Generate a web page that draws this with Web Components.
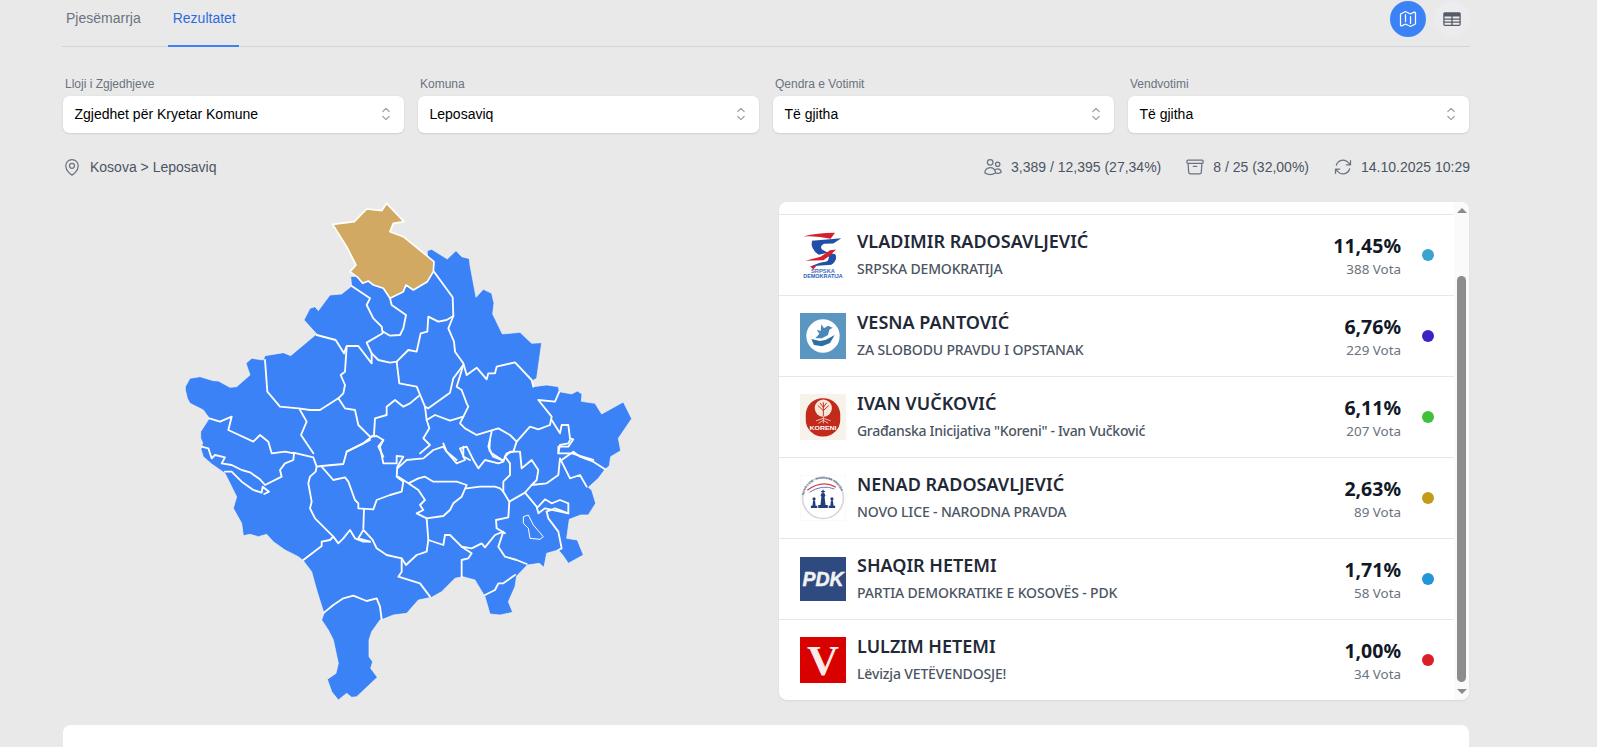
<!DOCTYPE html>
<html lang="en">
  <head>
    <meta charset="UTF-8" />
    <title>Rezultatet</title>
    <style>
      html, body { margin: 0; height: 747px; overflow: hidden; background: #e9e9e9; }
      body { font-family: "Liberation Sans", Arial, sans-serif; }
    </style>
  </head>
  <body>
    <results-page>
      <tab-bar slot="tabs"></tab-bar>

      <select-field slot="filters" label="Lloji i Zgjedhjeve" value="Zgjedhet për Kryetar Komune"></select-field>
      <select-field slot="filters" label="Komuna" value="Leposaviq"></select-field>
      <select-field slot="filters" label="Qendra e Votimit" value="Të gjitha"></select-field>
      <select-field slot="filters" label="Vendvotimi" value="Të gjitha"></select-field>

      <info-bar slot="info"></info-bar>
      <kosovo-map slot="map"></kosovo-map>

      <results-panel slot="panel">
        <candidate-row name="VLADIMIR RADOSAVLJEVIĆ" party="SRPSKA DEMOKRATIJA" pct="11,45%" votes="388 Vota" dot="#3ba3d0">
          <svg slot="logo" viewBox="0 0 138 140" width="46" height="47">
            <rect width="138" height="140" fill="#fff" />
            <path d="M10 13 Q50 2 105 2 L92 20 Q50 10 10 13Z" fill="#d6202c" />
            <path d="M36 26 L124 18 L100 34 L72 35 Q58 42 66 52 L84 62 L56 68 Q30 50 36 26Z" fill="#1f4fa8" />
            <path d="M78 60 L106 66 Q114 84 94 98 L32 102 L60 92 L80 88 Q94 76 78 60Z" fill="#1f4fa8" />
            <path d="M16 86 L62 74 L90 54 L108 52 L90 70 L70 84Z" fill="#d6202c" />
            <path d="M30 102 L50 100 L40 112Z" fill="#d6202c" />
            <text x="69" y="122" text-anchor="middle" font-family="Liberation Sans" font-weight="700" font-size="14" fill="#4a6fc0" textLength="72" lengthAdjust="spacingAndGlyphs">SRPSKA</text>
            <text x="69" y="137" text-anchor="middle" font-family="Liberation Sans" font-weight="700" font-size="14" fill="#2b62b8" textLength="118" lengthAdjust="spacingAndGlyphs">DEMOKRATIJA</text>
          </svg>
        </candidate-row>
        <candidate-row name="VESNA PANTOVIĆ" party="ZA SLOBODU PRAVDU I OPSTANAK" pct="6,76%" votes="229 Vota" dot="#3c22c4">
          <svg slot="logo" viewBox="0 0 138 138" width="46" height="46">
            <rect width="138" height="138" fill="#5a96c0" />
            <circle cx="69" cy="69" r="50" fill="#fff" />
            <path d="M64 34 L72 46 L84 38 L98 44 L88 50 L84 66 L66 76 L46 76 L58 62 L50 50 L62 54Z" fill="#4a87b8" />
            <path d="M34 78 L60 84 L78 80 L104 66 L90 90 L66 100 L42 96Z" fill="#2f6ea3" />
          </svg>
        </candidate-row>
        <candidate-row name="IVAN VUČKOVIĆ" party='Građanska Inicijativa "Koreni" - Ivan Vučković' tight pct="6,11%" votes="207 Vota" dot="#3fc23a">
          <svg slot="logo" viewBox="0 0 144 144" width="46" height="46">
            <rect width="144" height="144" fill="#f8f3ea" />
            <rect x="18" y="13" width="108" height="120" rx="52" fill="#c22a1c" />
            <circle cx="73" cy="44" r="27" fill="#f6e6da" />
            <path d="M73 70 V26 M73 52 L56 36 M73 52 L90 36 M73 42 L63 28 M73 42 L83 28" fill="none" stroke="#c22a1c" stroke-width="3" />
            <path d="M73 70 V92 M73 76 L50 84 M73 76 L96 84 M73 82 L58 92 M73 82 L88 92" fill="none" stroke="#f6e6da" stroke-width="2.5" />
            <text x="72" y="113" text-anchor="middle" font-family="Liberation Sans" font-weight="700" font-size="19" fill="#fff" textLength="85" lengthAdjust="spacingAndGlyphs">KORENI</text>
          </svg>
        </candidate-row>
        <candidate-row name="NENAD RADOSAVLJEVIĆ" party="NOVO LICE - NARODNA PRAVDA" pct="2,63%" votes="89 Vota" dot="#c49a1a">
          <svg slot="logo" viewBox="0 0 144 144" width="46" height="46">
            <rect width="144" height="144" fill="#fff" />
            <rect x=".5" y=".5" width="143" height="143" fill="none" stroke="#eee" />
            <circle cx="72" cy="72" r="64" fill="none" stroke="#d5d7db" stroke-width="5" />
            <path id="ring-text" d="M12 72 A60 60 0 0 1 132 72" fill="none" />
            <text font-family="Liberation Sans" font-size="10" font-weight="700" fill="#3f5580"><textPath href="#ring-text" startOffset="8">NOVO LICE - NARODNA PRAVDA</textPath></text>
            <path d="M23 48 Q68 14 112 38" fill="none" stroke="#d6404a" stroke-width="4" />
            <path d="M30 54 Q70 28 108 44" fill="none" stroke="#5578b8" stroke-width="3" />
            <g fill="#1f3f7a">
              <circle cx="44" cy="75" r="5" />
              <path d="M41 80h6l2 16h5v7H34v-7h5z" />
              <path d="M70 46h4v4h4v4h-4v4h-4v-4h-4v-4h4z" />
              <circle cx="72" cy="63" r="7" />
              <path d="M67 69h10l3 25h7v9H57v-9h7z" />
              <circle cx="100" cy="75" r="5" />
              <path d="M97 80h6l2 16h5v7H90v-7h5z" />
            </g>
          </svg>
        </candidate-row>
        <candidate-row name="SHAQIR HETEMI" party="PARTIA DEMOKRATIKE E KOSOVËS - PDK" pct="1,71%" votes="58 Vota" dot="#2196d8">
          <svg slot="logo" viewBox="0 0 46 44" width="46" height="44">
            <rect width="46" height="44" fill="#2f4a80" />
            <text x="23" y="29" text-anchor="middle" font-family="Liberation Sans" font-weight="700" font-style="italic" font-size="21" fill="#f2f2f2" stroke="#f2f2f2" stroke-width=".5" textLength="41" lengthAdjust="spacingAndGlyphs">PDK</text>
          </svg>
        </candidate-row>
        <candidate-row name="LULZIM HETEMI" party="Lëvizja VETËVENDOSJE!" pct="1,00%" votes="34 Vota" dot="#dc1f26">
          <svg slot="logo" viewBox="0 0 46 46" width="46" height="46">
            <rect width="46" height="46" fill="#d90000" />
            <text x="23" y="38" text-anchor="middle" font-family="Liberation Serif" font-weight="700" font-size="42" fill="#fbeaea" textLength="32" lengthAdjust="spacingAndGlyphs">V</text>
          </svg>
        </candidate-row>
      </results-panel>
    </results-page>

    <script>
      const ICONS = {
        pin: '<path d="M15 10.5a3 3 0 1 1-6 0 3 3 0 0 1 6 0Z"/><path d="M19.5 10.5c0 7.142-7.5 11.25-7.5 11.25S4.5 17.642 4.5 10.5a7.5 7.5 0 1 1 15 0Z"/>',
        users: '<path d="M15 19.128a9.38 9.38 0 0 0 2.625.372 9.337 9.337 0 0 0 4.121-.952 4.125 4.125 0 0 0-7.533-2.493M15 19.128v-.003c0-1.113-.285-2.16-.786-3.07M15 19.128v.106A12.318 12.318 0 0 1 8.624 21c-2.331 0-4.512-.645-6.374-1.766l-.001-.109a6.375 6.375 0 0 1 11.964-3.07M12 6.375a3.375 3.375 0 1 1-6.75 0 3.375 3.375 0 0 1 6.75 0Zm8.25 2.25a2.625 2.625 0 1 1-5.25 0 2.625 2.625 0 0 1 5.25 0Z"/>',
        box: '<path d="m20.25 7.5-.625 10.632a2.25 2.25 0 0 1-2.247 2.118H6.622a2.25 2.25 0 0 1-2.247-2.118L3.75 7.5M10 11.25h4M3.375 7.5h17.25c.621 0 1.125-.504 1.125-1.125v-1.5c0-.621-.504-1.125-1.125-1.125H3.375c-.621 0-1.125.504-1.125 1.125v1.5c0 .621.504 1.125 1.125 1.125Z"/>',
        sync: '<path d="M16.023 9.348h4.992v-.001M2.985 19.644v-4.992m0 0h4.992m-4.993 0 3.181 3.183a8.25 8.25 0 0 0 13.803-3.7M4.031 9.865a8.25 8.25 0 0 1 13.803-3.7l3.181 3.182m0-4.991v4.99"/>',
      };

      // Tabs and the map / table toggle
      class TabBar extends HTMLElement {
        constructor() {
          super();
          this.attachShadow({ mode: "open" });
        }

        connectedCallback() {
          this.shadowRoot.innerHTML = `
            <style>
              :host {
                display: flex;
                align-items: flex-start;
                justify-content: space-between;
                height: 46px;
                border-bottom: 1px solid #d1d5db;
                font-size: 14px;
              }
              nav { display: flex; gap: 23px; }
              a {
                display: block;
                height: 45px;
                padding: 9px 4px 0;
                box-sizing: border-box;
                line-height: 18px;
                color: #6b7280;
              }
              a + a { padding: 9px 4px 0 5px; width: 71px; }
              a.on { color: #2f6be0; border-bottom: 2px solid #3b82f6; height: 47px; }
              .toggle { display: flex; gap: 8px; padding-top: 1px; }
              button {
                width: 36px;
                height: 36px;
                padding: 0;
                border: 0;
                border-radius: 50%;
                display: flex;
                align-items: center;
                justify-content: center;
                background: #ececee;
                color: #555b66;
              }
              button.on { background: #3b82f6; color: #fff; }
            </style>
            <nav><a>Pjesëmarrja</a><a class="on">Rezultatet</a></nav>
            <div class="toggle">
              <button class="on">
                <svg width="20" height="20" viewBox="0 0 24 24" fill="none" stroke="currentColor" stroke-width="1.5" stroke-linecap="round" stroke-linejoin="round"><path d="M9 6.75V15m6-6v8.25m.503 3.498 4.875-2.437c.381-.19.622-.58.622-1.006V4.82c0-.836-.88-1.38-1.628-1.006l-3.869 1.934c-.317.159-.69.159-1.006 0L9.503 3.252a1.125 1.125 0 0 0-1.006 0L3.622 5.689C3.24 5.88 3 6.27 3 6.695V19.18c0 .836.88 1.38 1.628 1.006l3.869-1.934c.317-.159.69-.159 1.006 0l4.994 2.497c.317.158.69.158 1.006 0Z"/></svg>
              </button>
              <button>
                <svg width="20" height="20" viewBox="0 0 24 24" fill="currentColor"><path fill-rule="evenodd" clip-rule="evenodd" d="M1.5 5.625c0-1.036.84-1.875 1.875-1.875h17.25c1.035 0 1.875.84 1.875 1.875v12.75c0 1.035-.84 1.875-1.875 1.875H3.375A1.875 1.875 0 0 1 1.5 18.375V5.625ZM21 9.375A.375.375 0 0 0 20.625 9h-7.5a.375.375 0 0 0-.375.375v1.5c0 .207.168.375.375.375h7.5a.375.375 0 0 0 .375-.375v-1.5Zm0 3.75a.375.375 0 0 0-.375-.375h-7.5a.375.375 0 0 0-.375.375v1.5c0 .207.168.375.375.375h7.5a.375.375 0 0 0 .375-.375v-1.5Zm0 3.75a.375.375 0 0 0-.375-.375h-7.5a.375.375 0 0 0-.375.375v1.5c0 .207.168.375.375.375h7.5a.375.375 0 0 0 .375-.375v-1.5ZM10.875 18.75a.375.375 0 0 0 .375-.375v-1.5a.375.375 0 0 0-.375-.375h-7.5a.375.375 0 0 0-.375.375v1.5c0 .207.168.375.375.375h7.5ZM3.375 15h7.5a.375.375 0 0 0 .375-.375v-1.5a.375.375 0 0 0-.375-.375h-7.5a.375.375 0 0 0-.375.375v1.5c0 .207.168.375.375.375Zm0-3.75h7.5a.375.375 0 0 0 .375-.375v-1.5A.375.375 0 0 0 10.875 9h-7.5A.375.375 0 0 0 3 9.375v1.5c0 .207.168.375.375.375Z"/></svg>
              </button>
            </div>
          `;
        }
      }

      // Labelled dropdown
      class SelectField extends HTMLElement {
        constructor() {
          super();
          this.attachShadow({ mode: "open" });
        }

        connectedCallback() {
          this.shadowRoot.innerHTML = `
            <style>
              :host { display: block; }
              label {
                display: block;
                height: 18px;
                padding-left: 3px;
                font-size: 12px;
                line-height: 12px;
                color: #6b7280;
              }
              .box {
                display: flex;
                align-items: center;
                justify-content: space-between;
                height: 37px;
                margin: 0 1px;
                padding: 0 8px 2px 11.5px;
                box-sizing: border-box;
                background: #fff;
                border-radius: 6px;
                box-shadow: 0 0 1px rgba(0,0,0,.12), 0 1px 2px rgba(0,0,0,.1);
                font-size: 14px;
                color: #000;
              }
              svg { display: block; color: #9ca3af; }
            </style>
            <label>${this.getAttribute("label")}</label>
            <div class="box">
              <span>${this.getAttribute("value")}</span>
              <svg width="20" height="20" viewBox="0 0 24 24" fill="none" stroke="currentColor" stroke-width="1.5" stroke-linecap="round" stroke-linejoin="round"><path d="M8.25 15 12 18.75 15.75 15m-7.5-6L12 5.25 15.75 9"/></svg>
            </div>
          `;
        }
      }

      // Breadcrumb and turnout figures
      class InfoBar extends HTMLElement {
        constructor() {
          super();
          this.attachShadow({ mode: "open" });
        }

        item(icon, text) {
          return `<span class="item"><svg width="20" height="20" viewBox="0 0 24 24" fill="none" stroke="currentColor" stroke-width="1.5" stroke-linecap="round" stroke-linejoin="round">${ICONS[icon]}</svg>${text}</span>`;
        }

        connectedCallback() {
          this.shadowRoot.innerHTML = `
            <style>
              :host {
                display: flex;
                align-items: center;
                justify-content: space-between;
                height: 20px;
                font-size: 14px;
                color: #4b5563;
              }
              .item { display: flex; align-items: center; gap: 8px; }
              .stats { display: flex; gap: 24px; }
              svg { display: block; color: #6b7280; }
            </style>
            <div>${this.item("pin", "Kosova &gt; Leposaviq")}</div>
            <div class="stats">
              ${this.item("users", "3,389 / 12,395 (27,34%)")}
              ${this.item("box", "8 / 25 (32,00%)")}
              ${this.item("sync", "14.10.2025 10:29")}
            </div>
          `;
        }
      }

      // Municipalities, traced in 3x units of the crop starting at 170,190
      class KosovoMap extends HTMLElement {
        constructor() {
          super();
          this.attachShadow({ mode: "open" });
        }

        connectedCallback() {
          const low = (pts) =>
            pts.trim().split(/\s+/).map((p) => {
              const [x, y] = p.split(",").map(Number);
              return x + "," + (y + 750);
            }).join(" ");

          const outline =
            "772,182 785,178 832,207 858,182 875,200 898,206 900,225 918,322 940,298 965,310 972,340 968,372 997,432 1050,427 1085,460 1115,458 1100,565 1088,572 1090,590 1130,585 1165,590 1168,605 1205,612 1222,603 1236,612 1234,634 1275,640 1295,672 1360,636 1385,686 1345,745 1352,782 " +
            low("1322,50 1318,78 1305,88 1285,115 1255,142 1265,150 1277,190 1255,225 1232,225 1198,238 1190,295 1222,300 1240,345 1195,370 1178,345 1165,330 1130,340 1122,382 1108,370 1072,375 1040,408 1035,440 1015,485 1028,517 990,525 960,522 945,470 915,420 878,410 855,415 815,455 785,472 745,480 710,520 670,525 640,537 630,540 605,575 597,600 597,650 608,665 602,685 622,712 560,770 545,772 530,760 505,780 485,755 472,718 498,700 505,670 490,600 475,570 455,540 462,520 440,450 425,395 400,362 385,350 345,330 310,305 290,283 265,290 240,283 220,287 215,250 190,205 200,170 165,100 125,72 100,50 93,28 98,8") +
            " 92,745 92,725 118,685 100,660 60,640 52,625 46,600 46,590 60,565 90,560 130,572 145,573 180,592 200,590 240,555 228,520 245,505 280,510 285,497 340,488 362,497 430,440 440,432 402,390 420,355 435,350 445,362 480,315 515,312 545,288 542,260 565,258 650,240 772,215";

          const gold =
            "488,103 553,95 590,57 635,62 650,40 702,95 670,100 660,125 700,140 792,215 790,245 772,275 730,300 708,285 700,305 660,325 640,295 610,285 595,273 578,280 563,262 540,245 558,225 530,170";

          const upper = [
            "792,245 848,322 850,378 835,415 852,455 855,485 880,520 890,555 920,533 950,568 955,550 975,550 980,530 1035,517 1085,570 1090,590",
            "545,288 600,325 590,345 610,385 635,410 638,430 590,458 605,490 605,520 565,468 530,468 522,490 497,450 440,435",
            "660,325 665,345 708,375 700,415 690,435 660,437 640,425",
            "850,378 830,390 805,395 775,380 772,425 752,430 740,485 715,480 680,515 660,518 625,510 605,490",
            "680,515 688,580 740,590 765,650 775,655 840,608 850,565 880,525",
            "880,525 860,590 875,600 890,640 895,650 880,680 840,692 795,675 770,690",
            "765,650 770,690 778,715 760,745 780,765 750,790",
            "880,680 870,700 885,715 920,735 985,715 1020,735 1040,755 1080,710 1105,718 1140,705 1145,680 1105,630 1155,635 1168,605",
            "285,510 292,605 330,650 385,655 420,660 450,660 505,625 520,610 525,585 512,555 525,545 530,470",
            "505,625 525,655 555,660 565,705 600,740 620,738 640,750 625,770 640,800",
            "750,615 720,640 700,650 675,630 650,650 650,675 615,685 612,735 605,740 580,760 530,785",
            "390,660 410,695 393,735 430,790",
            "118,685 150,695 185,680 175,720 250,755 270,735 295,755 305,790 345,785 372,790",
            "820,760 830,785 860,810",
            "880,770 880,800 900,810",
            "965,725 955,770 965,790 1000,812",
            "1040,755 1030,785 1010,790 1005,800",
            "1145,690 1170,730 1175,705 1195,705 1200,745 1210,748 1195,770 1165,770 1165,790 1200,790",
            "1205,790 1270,810",
          ];

          const lower = [
            "95,20 115,25 125,55 135,45 165,52 155,70 185,75 215,90 240,97 270,118 285,135 335,110 330,90 345,70 370,60 372,40",
            "165,95 185,95 215,125 250,150 275,158 278,140 297,155 283,162",
            "370,38 430,52 440,80 455,78 520,72 530,35 580,10 600,0",
            "440,80 437,95 420,110 415,130 425,185 420,205 435,235 490,290 480,300 455,305 455,318 400,360",
            "455,80 490,120 525,112 535,125 555,180 565,190 565,205 610,208 620,180 660,165 695,155 700,125 680,110 682,80 700,50 680,48 680,70 640,70 630,20 640,0",
            "682,85 710,60 760,55 790,30 820,20 830,35 860,70 885,60 870,25 890,20 910,60 925,85 945,60 985,70 1000,65 1005,50",
            "685,110 715,130 745,115 765,110 790,125 860,125 890,135 875,170 850,190 840,210 820,228 770,235 740,220 760,210 750,195 765,180 745,150 715,130",
            "890,145 930,140 975,140 990,145 1000,155 1018,185 1015,232 978,240 980,265 1005,280",
            "770,235 775,300 770,335 740,345 708,375 695,355 650,345 620,325 608,300 580,270 565,295 600,305",
            "582,208 580,265",
            "490,290 505,310 520,295 540,270 555,295 580,305 600,305",
            "695,355 695,395 685,410 750,430 780,470",
            "775,300 820,315 825,285 840,285 875,320 905,340 895,355 875,360 875,410",
            "875,320 905,325 935,310 945,322 975,285 1000,275 985,320 1005,350 1040,360 1070,372",
            "1018,185 1065,158 1100,200 1105,220 1125,205 1195,220 1195,190 1170,180 1145,190 1125,178 1105,200",
            "1130,215 1135,235 1165,275 1175,325 1165,330",
            "1130,215 1155,205 1195,220",
            "1000,155 1000,125 1020,105 1020,70 1005,50 1020,35 1050,35 1055,85 1085,60 1105,90 1100,120 1085,135 1130,130 1165,105 1170,55 1200,115 1230,105 1250,140",
            "1175,60 1210,35 1230,50 1270,65 1305,88",
            "1165,40 1170,15 1195,10 1200,0",
            "1065,158 1085,135",
            "960,0 958,30 970,50 1000,62",
            "462,518 490,495 520,475 550,467 590,483 620,475 630,500 635,538",
            "945,465 975,450 985,430 1000,430 1035,405",
          ];

          const lake = "1060,230 1075,225 1090,255 1120,290 1110,298 1080,295 1075,265 1060,250";

          this.shadowRoot.innerHTML = `
            <style>
              :host { display: block; }
              svg { display: block; }
              polyline { fill: none; stroke: #fff; stroke-width: 5.5; stroke-linejoin: round; stroke-linecap: round; }
            </style>
            <svg width="705" height="498" viewBox="62 202 705 498">
              <g transform="translate(170 190) scale(.33333)">
                <polygon points="${outline}" fill="#3b82f6" stroke="#f4f4f4" stroke-width="2" stroke-linejoin="round" />
                ${upper.map((p) => `<polyline points="${p}" />`).join("")}
                ${lower.map((p) => `<polyline points="${low(p)}" />`).join("")}
                <polygon points="${low(lake)}" fill="#3b82f6" stroke="#fff" stroke-width="3" />
                <polygon points="${gold}" fill="#d1a962" stroke="#fff" stroke-width="5" stroke-linejoin="round" />
              </g>
            </svg>
          `;
        }
      }

      // One candidate in the results list
      class CandidateRow extends HTMLElement {
        constructor() {
          super();
          this.attachShadow({ mode: "open" });
        }

        connectedCallback() {
          const spacing = this.hasAttribute("tight") ? "-.31px" : "-.15px";
          this.shadowRoot.innerHTML = `
            <style>
              :host {
                display: flex;
                align-items: center;
                height: 80px;
                padding: 0 20px 0 21px;
                border-top: 1px solid #e5e7eb;
                font-family: "Noto Sans", sans-serif;
              }
              .logo { display: flex; width: 46px; flex: none; }
              ::slotted(svg) { display: block; }
              .who { flex: 1; margin: -2px 0 0 11px; min-width: 0; }
              .name { font-size: 18px; font-weight: 600; line-height: 24px; color: #1f2937; }
              .party { margin-top: 6px; font-size: 14px; font-weight: 500; line-height: 20px; letter-spacing: ${spacing}; color: #4b5563; }
              .nums { text-align: right; margin-top: 3px; }
              .pct { font-size: 19.5px; font-weight: 700; line-height: 24px; color: #111827; }
              .votes { margin-top: 1px; font-size: 13.4px; line-height: 20px; color: #6b7280; }
              .dot { width: 12px; height: 12px; margin-left: 21px; border-radius: 50%; background: ${this.getAttribute("dot")}; }
            </style>
            <div class="logo"><slot name="logo"></slot></div>
            <div class="who">
              <div class="name">${this.getAttribute("name")}</div>
              <div class="party">${this.getAttribute("party")}</div>
            </div>
            <div class="nums">
              <div class="pct">${this.getAttribute("pct")}</div>
              <div class="votes">${this.getAttribute("votes")}</div>
            </div>
            <div class="dot"></div>
          `;
        }
      }

      // White card with the list and its scrollbar
      class ResultsPanel extends HTMLElement {
        constructor() {
          super();
          this.attachShadow({ mode: "open" });
        }

        connectedCallback() {
          this.shadowRoot.innerHTML = `
            <style>
              :host {
                display: flex;
                height: 498px;
                overflow: hidden;
                background: #fff;
                border-radius: 8px;
                box-shadow: 0 1px 2px rgba(0,0,0,.08);
              }
              .list { flex: 1; min-width: 0; padding-top: 12px; }
              .bar {
                width: 15px;
                flex: none;
                box-sizing: border-box;
                display: flex;
                flex-direction: column;
                align-items: center;
                background: #fafafa;
                padding-top: 6px;
              }
              .up, .down { width: 0; height: 0; border-left: 5px solid transparent; border-right: 5px solid transparent; }
              .up { border-bottom: 5px solid #8a8a8a; }
              .down { border-top: 5px solid #8a8a8a; margin-top: 7px; }
              .thumb { width: 9px; height: 406px; margin-top: 63px; border-radius: 5px; background: #8c8c8c; }
            </style>
            <div class="list"><slot></slot></div>
            <div class="bar"><i class="up"></i><i class="thumb"></i><i class="down"></i></div>
          `;
        }
      }

      // Page frame
      class ResultsPage extends HTMLElement {
        constructor() {
          super();
          this.attachShadow({ mode: "open" });
        }

        connectedCallback() {
          this.shadowRoot.innerHTML = `
            <style>
              :host {
                display: block;
                width: 1408px;
                margin-left: 62px;
              }
              .filters { display: grid; grid-template-columns: repeat(4, 1fr); gap: 12px; margin-top: 31px; }
              .info { margin-top: 24px; }
              .main { display: grid; grid-template-columns: 705px 690px; gap: 12px; margin-top: 25px; }
              .card { height: 300px; margin: 25px 1px 0; background: #fff; border-radius: 8px; }
            </style>
            <slot name="tabs"></slot>
            <div class="filters"><slot name="filters"></slot></div>
            <div class="info"><slot name="info"></slot></div>
            <div class="main"><slot name="map"></slot><slot name="panel"></slot></div>
            <div class="card"></div>
          `;
        }
      }

      customElements.define("tab-bar", TabBar);
      customElements.define("select-field", SelectField);
      customElements.define("info-bar", InfoBar);
      customElements.define("kosovo-map", KosovoMap);
      customElements.define("candidate-row", CandidateRow);
      customElements.define("results-panel", ResultsPanel);
      customElements.define("results-page", ResultsPage);
    </script>
  </body>
</html>
